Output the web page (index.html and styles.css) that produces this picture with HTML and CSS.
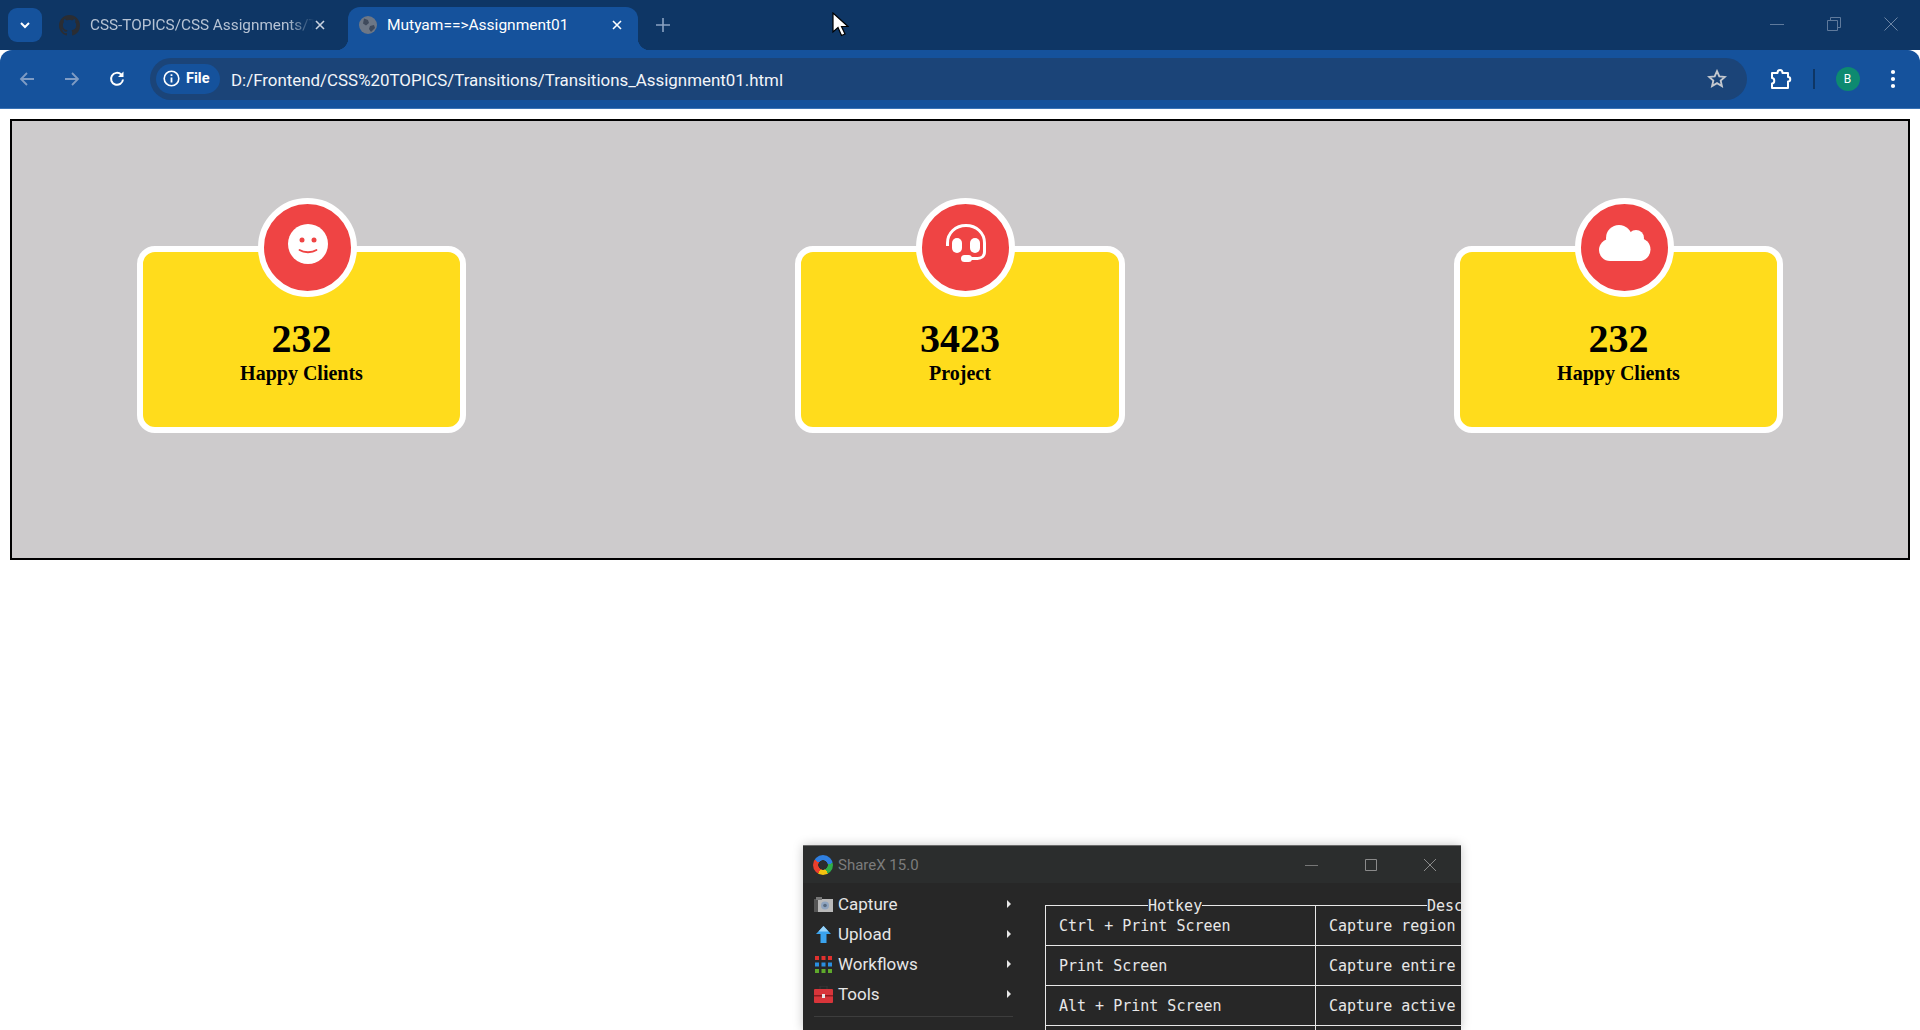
FILE: index.html
```html
<!DOCTYPE html>
<html lang="en">
<head>
<meta charset="utf-8">
<title>Mutyam==&gt;Assignment01</title>
<link rel="stylesheet" href="styles.css">
</head>
<body>
<header class="browser">
  <div class="tabstrip">
    <button class="tab-search"><svg width="14" height="14" viewBox="0 0 14 14"><path d="M3 5l4 4 4-4" fill="none" stroke="#fff" stroke-width="2"/></svg></button>
    <div class="tab tab-idle">
      <svg class="fav" width="21" height="21" viewBox="0 0 16 16"><path fill="#2a2d33" d="M8 0C3.58 0 0 3.58 0 8c0 3.54 2.29 6.53 5.47 7.59.4.07.55-.17.55-.38 0-.19-.01-.82-.01-1.49-2.01.37-2.53-.49-2.69-.94-.09-.23-.48-.94-.82-1.13-.28-.15-.68-.52-.01-.53.63-.01 1.08.58 1.23.82.72 1.21 1.87.87 2.33.66.07-.52.28-.87.51-1.07-1.78-.2-3.64-.89-3.64-3.95 0-.87.31-1.59.82-2.15-.08-.2-.36-1.02.08-2.12 0 0 .67-.21 2.2.82.64-.18 1.32-.27 2-.27.68 0 1.36.09 2 .27 1.53-1.04 2.2-.82 2.2-.82.44 1.1.16 1.92.08 2.12.51.56.82 1.27.82 2.15 0 3.07-1.87 3.75-3.65 3.95.29.25.54.73.54 1.48 0 1.07-.01 1.93-.01 2.2 0 .21.15.46.55.38A8.013 8.013 0 0016 8c0-4.42-3.58-8-8-8z"/></svg>
      <span class="tab-title tab-title-fade">CSS-TOPICS/CSS Assignments/Transitions</span>
      <svg class="tab-x" width="12" height="12" viewBox="0 0 12 12"><path d="M2 2l8 8M10 2l-8 8" stroke="#c9d3e0" stroke-width="1.6"/></svg>
    </div>
    <div class="tab tab-active">
      <svg class="fav" width="18" height="18" viewBox="0 0 18 18"><circle cx="9" cy="9" r="9" fill="#6d7786"/><path d="M5 2.5l4 1.5 1 3-3 2.500-3-2zM11 10l4-1 1 3-4 4-2-3z" fill="#3f4a5c"/></svg>
      <span class="tab-title tab-title-on">Mutyam==&gt;Assignment01</span>
      <svg class="tab-x" width="12" height="12" viewBox="0 0 12 12"><path d="M2 2l8 8M10 2l-8 8" stroke="#fff" stroke-width="1.6"/></svg>
    </div>
    <svg class="new-tab" width="14" height="14" viewBox="0 0 14 14"><path d="M7 0v14M0 7h14" stroke="#8ba3c2" stroke-width="1.6"/></svg>
    <div class="win-controls">
      <svg width="14" height="14" viewBox="0 0 14 14"><path d="M0 7.500h14" stroke="#5f7a9c"/></svg>
      <svg width="14" height="14" viewBox="0 0 14 14"><path d="M.5 3.500h10v10H.5zM3.500 3.500V.5h10v10h-3" fill="none" stroke="#5f7a9c"/></svg>
      <svg width="14" height="14" viewBox="0 0 14 14"><path d="M.5.5l13 13M13.500.5l-13 13" stroke="#6d86a6"/></svg>
    </div>
  </div>
  <div class="toolbar">
    <svg class="nav" width="18" height="18" viewBox="0 0 18 18"><path d="M16 9H3M9 3L3 9l6 6" fill="none" stroke="#7f9cc4" stroke-width="1.8"/></svg>
    <svg class="nav" width="18" height="18" viewBox="0 0 18 18"><path d="M2 9h13M9 3l6 6-6 6" fill="none" stroke="#7f9cc4" stroke-width="1.8"/></svg>
    <svg class="nav" width="18" height="18" viewBox="0 0 18 18"><path d="M15 9.500A6 6 0 1 1 13.200 4.500" fill="none" stroke="#fff" stroke-width="2"/><path d="M15.500 1.500v5.500H10z" fill="#fff"/></svg>
    <div class="omnibox">
      <div class="chip">
        <svg width="17" height="17" viewBox="0 0 17 17"><circle cx="8.500" cy="8.500" r="7.300" fill="none" stroke="#fff" stroke-width="1.600"/><path d="M8.500 7.500v5M8.500 4.200v1.800" stroke="#fff" stroke-width="1.800"/></svg>
        <span>File</span>
      </div>
      <span class="url">D:/Frontend/CSS%20TOPICS/Transitions/Transitions_Assignment01.html</span>
      <svg class="star" width="20" height="20" viewBox="0 0 20 20"><path d="M10 2.200l2.300 5.200 5.600.5-4.200 3.700 1.200 5.500L10 14.200l-4.900 2.900 1.200-5.500L2.100 7.900l5.600-.5z" fill="none" stroke="#c4c8ce" stroke-width="1.900"/></svg>
    </div>
    <svg class="puzzle" width="22" height="22" viewBox="0 0 22 22"><path d="M2 5h5.500c0-4 5-4 5 0H18v4c3 0 3 4.500 0 4.500V20H2v-4.500c3 0 3-5.500 0-5.500z" fill="none" stroke="#fff" stroke-width="2" stroke-linejoin="round"/></svg>
    <span class="tool-sep"></span>
    <span class="avatar">B</span>
    <svg class="dots" width="6" height="20" viewBox="0 0 6 20"><circle cx="3" cy="3" r="2.100" fill="#fff"/><circle cx="3" cy="10" r="2.100" fill="#fff"/><circle cx="3" cy="17" r="2.100" fill="#fff"/></svg>
  </div>
</header>

<main class="page">
  <section class="stage">
    <article class="card">
      <div class="badge">
        <svg width="40" height="40" viewBox="0 0 40 40"><circle cx="20" cy="20" r="20" fill="#fff"/><circle cx="14" cy="16" r="2.500" fill="#ef4444"/><circle cx="26" cy="16" r="2.500" fill="#ef4444"/><path d="M11.500 26c4.500 3 12.500 3 17 0" fill="none" stroke="#ef4444" stroke-width="1.800" stroke-linecap="round"/></svg>
      </div>
      <h2 class="count">232</h2>
      <p class="label">Happy Clients</p>
    </article>
    <article class="card card-mid">
      <div class="badge">
        <svg width="42" height="40" viewBox="0 0 42 40"><path d="M2.500 22v-3C2.500 9 10.500 1.500 21 1.500S39.500 9 39.500 19v9c0 4-3 6.500-7 6.500H25" fill="none" stroke="#fff" stroke-width="3"/><rect x="7" y="14" width="10" height="15" rx="5" fill="#fff"/><rect x="25" y="14" width="10" height="15" rx="5" fill="#fff"/><rect x="16" y="31" width="11" height="7" rx="3.500" fill="#fff"/></svg>
      </div>
      <h2 class="count">3423</h2>
      <p class="label">Project</p>
    </article>
    <article class="card">
      <div class="badge">
        <svg width="52" height="37" viewBox="0 0 52 37"><g fill="#fff"><circle cx="20" cy="13" r="13"/><circle cx="37" cy="13" r="8"/><circle cx="11" cy="25" r="11"/><circle cx="40" cy="24.500" r="11.500"/><rect x="11" y="18" width="29" height="18"/></g></svg>
      </div>
      <h2 class="count">232</h2>
      <p class="label">Happy Clients</p>
    </article>
  </section>
</main>

<div class="sharex">
  <div class="sx-title">
    <span class="sx-logo"></span>
    <span class="sx-name">ShareX 15.0</span>
    <div class="sx-controls">
      <svg width="14" height="14" viewBox="0 0 14 14"><path d="M0 7.500h13" stroke="#777"/></svg>
      <svg width="14" height="14" viewBox="0 0 14 14"><path d="M1.500 1.500h11v11h-11z" fill="none" stroke="#8a8a8a"/></svg>
      <svg width="14" height="14" viewBox="0 0 14 14"><path d="M1 1l12 12M13 1L1 13" stroke="#8a8a8a"/></svg>
    </div>
  </div>
  <div class="sx-body">
    <nav class="sx-menu">
      <div class="sx-item">
        <svg width="19" height="15" viewBox="0 0 19 15"><rect x="0" y="2" width="19" height="13" fill="#b9b9b9"/><rect x="0" y="2" width="4" height="13" fill="#555"/><rect x="2" y="0" width="6" height="3" fill="#777"/><circle cx="11" cy="8.500" r="4" fill="#8fa4bf"/><circle cx="11" cy="8.500" r="1.800" fill="#5a6b80"/></svg>
        <span>Capture</span><i class="sx-arrow"></i>
      </div>
      <div class="sx-item">
        <svg width="19" height="17" viewBox="0 0 19 17"><path d="M9.500 0l7.500 8h-4.500v9h-6V8H2z" fill="#3aa3ee"/><path d="M9.500 0l5 5.500h-10z" fill="#9ad4fa"/></svg>
        <span>Upload</span><i class="sx-arrow"></i>
      </div>
      <div class="sx-item">
        <svg width="19" height="17" viewBox="0 0 19 17"><g fill="#e0312e"><rect x="1" y="0" width="4" height="4"/><rect x="7.500" y="0" width="4" height="4"/><rect x="14" y="0" width="4" height="4"/></g><g fill="#2a8fe0"><rect x="1" y="6.500" width="4" height="4"/><rect x="7.500" y="6.500" width="4" height="4"/><rect x="14" y="6.500" width="4" height="4"/></g><g fill="#5fa92c"><rect x="1" y="13" width="4" height="4"/><rect x="7.500" y="13" width="4" height="4"/><rect x="14" y="13" width="4" height="4"/></g></svg>
        <span>Workflows</span><i class="sx-arrow"></i>
      </div>
      <div class="sx-item">
        <svg width="19" height="17" viewBox="0 0 19 17"><path d="M6 3V0h7v3" fill="none" stroke="#333" stroke-width="1.500"/><rect x="0" y="3" width="19" height="14" rx="1" fill="#d8353a"/><rect x="0" y="9" width="19" height="1.500" fill="#8e1c20"/><rect x="8" y="8" width="3" height="4" fill="#e8e8e8"/></svg>
        <span>Tools</span><i class="sx-arrow"></i>
      </div>
      <div class="sx-sep"></div>
    </nav>
    <div class="sx-table">
      <div class="sx-legend sx-legend-a"><span>Hotkey</span></div>
      <div class="sx-legend sx-legend-b"><span>Description</span></div>
      <div class="sx-cell">Ctrl + Print Screen</div>
      <div class="sx-cell">Capture region</div>
      <div class="sx-cell">Print Screen</div>
      <div class="sx-cell">Capture entire screen</div>
      <div class="sx-cell">Alt + Print Screen</div>
      <div class="sx-cell">Capture active window</div>
      <div class="sx-cell">Shift + Print Screen</div>
      <div class="sx-cell">Start/Stop screen recording</div>
    </div>
  </div>
</div>

<svg class="cursor" width="17" height="25" viewBox="0 0 17 25"><path d="M1 1v19l5-4.500 3.500 8 3.500-1.500-3.500-7.500H16z" fill="#fff" stroke="#000" stroke-width="1.200"/></svg>
</body>
</html>
```

FILE: styles.css
```css
* { box-sizing: border-box; }

html, body {
  margin: 0;
  height: 1030px;
  overflow: hidden;
  background: #fff;
}

body { font-family: "Liberation Serif", serif; }

/* Browser chrome */
.browser { font-family: Roboto, "Noto Sans", sans-serif; }

.tabstrip {
  height: 50px;
  background: #0e3665;
  display: flex;
  align-items: flex-end;
  padding-left: 8px;
}

.tab-search {
  width: 34px;
  height: 34px;
  margin-bottom: 8px;
  border: 0;
  padding: 0;
  border-radius: 9px;
  background: #15529c;
  display: flex;
  align-items: center;
  justify-content: center;
}

.tab {
  height: 43px;
  display: flex;
  align-items: center;
  border-radius: 12px 12px 0 0;
  position: relative;
}

.tab-idle {
  width: 306px;
  padding: 0 22px 7px 17px;
}

.tab-active {
  width: 290px;
  padding: 0 15px 7px 11px;
  background: #15529c;
}

.fav { flex: none; margin-right: 10px; }

.tab-title {
  flex: 1;
  min-width: 0;
  font-size: 15.300px;
  white-space: nowrap;
  overflow: hidden;
  color: #b6c3d4;
}

.tab-title-fade {
  -webkit-mask-image: linear-gradient(to right, #000 88%, transparent 100%);
  mask-image: linear-gradient(to right, #000 88%, transparent 100%);
}

.tab-title-on { color: #fff; font-size: 15.500px; }

.tab-x { flex: none; }

.tab-active::before,
.tab-active::after {
  content: "";
  position: absolute;
  bottom: 0;
  width: 12px;
  height: 12px;
}

.tab-active::before {
  left: -12px;
  background: radial-gradient(circle at 0 0, transparent 12px, #15529c 12.500px);
}

.tab-active::after {
  right: -12px;
  background: radial-gradient(circle at 100% 0, transparent 12px, #15529c 12.500px);
}

.new-tab { flex: none; margin: 0 0 18px 18px; }

.win-controls {
  margin-left: auto;
  padding: 0 22px 19px 0;
  display: flex;
  gap: 43px;
}

.toolbar {
  height: 59px;
  background: #15529c;
  border-bottom: 1px solid #3a73b5;
  border-radius: 12px 12px 0 0;
  display: flex;
  align-items: center;
  padding: 0 0 1px 18px;
}

.nav { flex: none; margin-right: 27px; }
.nav:nth-child(3) { margin-right: 24px; }

.omnibox {
  width: 1597px;
  height: 42px;
  border-radius: 21px;
  background: #1b4478;
  display: flex;
  align-items: center;
  padding: 0 20px 0 6px;
}

.chip {
  height: 30px;
  width: 64px;
  border-radius: 15px;
  background: #15529c;
  display: flex;
  align-items: center;
  gap: 6px;
  padding-left: 7px;
  color: #fff;
  font-size: 14.500px;
  font-weight: 700;
}

.url {
  margin-left: 11px;
  padding-top: 2px;
  flex: 1;
  color: #f2f5f9;
  font-size: 16.900px;
  white-space: nowrap;
}

.star { flex: none; }

.puzzle { flex: none; margin-left: 23px; }

.tool-sep {
  flex: none;
  width: 1.500px;
  height: 20px;
  margin-left: 21px;
  background: #0e3665;
}

.avatar {
  flex: none;
  width: 24px;
  height: 24px;
  margin-left: 21px;
  border-radius: 50%;
  background: #0d8a70;
  color: #fff;
  font-size: 12px;
  display: flex;
  align-items: center;
  justify-content: center;
}

.dots { flex: none; margin-left: 30px; }

/* Page */
.page { padding: 10px; }

.stage {
  height: 441px;
  border: 2px solid #000;
  background: #cdcbcc;
  padding: 125px;
  display: flex;
  justify-content: space-between;
}

.card {
  width: 329px;
  height: 187px;
  position: relative;
  border: 6px solid #fff;
  border-radius: 18px;
  background: #ffdc1c;
  padding-top: 63px;
  text-align: center;
  color: #000;
}

.card-mid { width: 330px; }

.badge {
  position: absolute;
  left: 115px;
  top: -54px;
  width: 99px;
  height: 99px;
  padding-bottom: 8px;
  border: 6px solid #fff;
  border-radius: 50%;
  background: #ef4444;
  display: flex;
  align-items: center;
  justify-content: center;
}

.count {
  margin: 0;
  font-size: 40px;
  font-weight: 700;
}

.label {
  margin: 0;
  font-size: 20px;
  font-weight: 700;
}

/* ShareX window */
.sharex {
  position: absolute;
  left: 803px;
  top: 845px;
  width: 658px;
  height: 185px;
  background: #272727;
  border-top: 1px solid #6a6a6a;
  box-shadow: 0 0 10px rgba(0, 0, 0, .22);
  overflow: hidden;
  font-family: Roboto, "Noto Sans", sans-serif;
  color: #e6e6e6;
}

.sx-title {
  height: 37px;
  background: #2b2d2d;
  display: flex;
  align-items: center;
  padding-left: 10px;
}

.sx-logo {
  flex: none;
  width: 20px;
  height: 20px;
  border-radius: 50%;
  background:
    radial-gradient(circle at 50% 50%, #2b2d2d 0 4.500px, transparent 5px),
    conic-gradient(#2f7fe0 0 22%, #2fae4a 22% 42%, #f2c20f 42% 58%, #ea3f2c 58% 84%, #2f7fe0 84%);
}

.sx-name {
  margin-left: 5px;
  font-size: 15px;
  color: #7c7c7c;
}

.sx-controls {
  margin-left: auto;
  padding-right: 24px;
  display: flex;
  gap: 45px;
}

.sx-body {
  display: flex;
}

.sx-menu {
  flex: none;
  width: 242px;
  padding: 6px 0 0 11px;
}

.sx-item {
  height: 30px;
  display: flex;
  align-items: center;
  font-size: 17px;
}

.sx-item svg { flex: none; }

.sx-item span { margin-left: 5px; }

.sx-arrow {
  margin-left: auto;
  margin-right: 34px;
  border-left: 4px solid #e8e8e8;
  border-top: 4.500px solid transparent;
  border-bottom: 4.500px solid transparent;
}

.sx-sep {
  width: 199px;
  height: 1px;
  margin-top: 7px;
  background: #3d3d3d;
}

.sx-table {
  flex: 1;
  padding-top: 22px;
  display: grid;
  grid-template-columns: 270px 160px;
  grid-template-rows: 1px 40px 40px 40px 40px;
  overflow: hidden;
  font-family: "DejaVu Sans Mono", "Liberation Mono", monospace;
  font-size: 15px;
  color: #e8e8e8;
}

.sx-legend {
  height: 1px;
  display: flex;
  align-items: center;
  border-left: 1px solid #e8e8e8;
  white-space: nowrap;
  line-height: 1px;
}

.sx-legend span { padding: 2px 0 0; }

.sx-legend::before {
  content: "";
  flex: none;
  height: 1px;
  background: #e8e8e8;
}

.sx-legend::after {
  content: "";
  flex: 1;
  height: 1px;
  background: #e8e8e8;
}

.sx-legend-a::before { width: 102px; }
.sx-legend-b::before { width: 111px; }

.sx-cell {
  height: 40px;
  padding-left: 13px;
  display: flex;
  align-items: center;
  border-left: 1px solid #e8e8e8;
  border-bottom: 1px solid #e8e8e8;
  white-space: nowrap;
  overflow: hidden;
}

/* Mouse pointer over the tab strip */
.cursor {
  position: absolute;
  left: 832px;
  top: 12px;
}
```
